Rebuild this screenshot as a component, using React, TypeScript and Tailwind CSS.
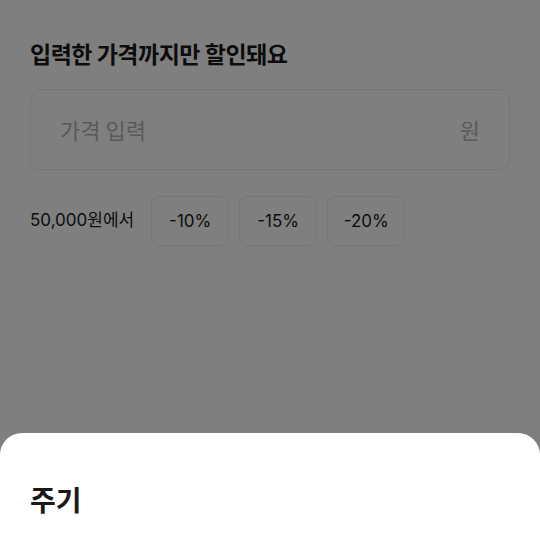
const font = "font-['Inter','Noto_Sans_CJK_KR','Noto_Sans',sans-serif]";
const hangul = "font-['Noto_Sans_CJK_KR','Noto_Sans',sans-serif]";

const discounts = ["-10%", "-15%", "-20%"];

export default function App() {
  return (
    <div className={`relative h-[540px] w-[540px] overflow-hidden bg-white ${font}`}>
      <div className="flex flex-col px-[30px] pt-[38px]">
        <h2 className={`text-[23px] font-bold leading-[30px] tracking-[-0.5px] text-[#191919] ${hangul}`}>
          입력한 가격까지만 할인돼요
        </h2>

        <div className="mt-[21px] flex h-[81px] items-center justify-between rounded-[10px] border border-[#ececec] px-[29px]">
          <span className={`text-[22px] text-[#b4b4b4] ${hangul}`}>가격 입력</span>
          <span className={`text-[22px] text-[#b4b4b4] ${hangul}`}>원</span>
        </div>

        <div className="mt-[26px] flex items-center">
          <span className="mr-[17px] text-[17px] text-[#191919]">50,000원에서</span>
          <div className="flex gap-[10px]">
            {discounts.map((d) => (
              <button
                key={d}
                className="flex h-[50px] w-[78px] items-center justify-center rounded-[8px] border border-[#ececec] pt-px text-[17px] text-[#191919]"
              >
                {d}
              </button>
            ))}
          </div>
        </div>
      </div>

      {/* dim overlay */}
      <div className="absolute inset-0 bg-black/50" />

      {/* bottom sheet */}
      <div className="absolute inset-x-0 bottom-0 top-[433px] rounded-t-[22px] bg-white px-[30px] pt-[47px]">
        <h3 className={`text-[28px] font-bold leading-[38px] text-[#191919] ${hangul}`}>주기</h3>
      </div>
    </div>
  );
}
